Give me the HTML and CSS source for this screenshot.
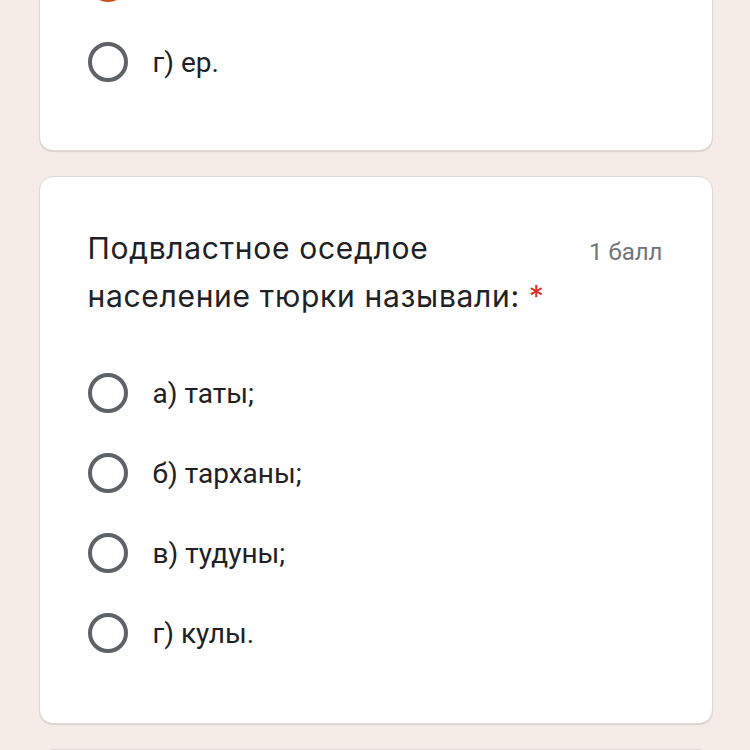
FILE: index.html
```html
<!DOCTYPE html>
<html lang="ru">
<head>
<meta charset="utf-8">
<link rel="stylesheet" href="styles.css">
</head>
<body>
<div class="page">
  <div class="card card-first">
    <div class="option"><span class="radio radio-on"><span class="dot"></span></span></div>
    <div class="option"><span class="radio"></span><span class="label">г) ер.</span></div>
  </div>
  <div class="card">
    <div class="head">
      <div class="title">Подвластное оседлое население тюрки называли:<span class="req">*</span></div>
      <div class="points">1 балл</div>
    </div>
    <div class="options">
      <div class="option"><span class="radio"></span><span class="label">а) таты;</span></div>
      <div class="option"><span class="radio"></span><span class="label">б) тарханы;</span></div>
      <div class="option"><span class="radio"></span><span class="label">в) тудуны;</span></div>
      <div class="option"><span class="radio"></span><span class="label">г) кулы.</span></div>
    </div>
  </div>
  <div class="card card-last"></div>
</div>
</body>
</html>
```
FILE: styles.css
```css
html, body {
  margin: 0;
  padding: 0;
  background: #f5ece7;
  overflow: hidden;
  height: 750px;
}
.page {
  width: 674px;
  margin: 0 auto;
  padding-left: 1px;
  display: flex;
  flex-direction: column;
  gap: 25px;
  font-family: Roboto, "Noto Sans", sans-serif;
  color: #202124;
}
.card {
  background: #fff;
  border: 1px solid #dddad9;
  border-radius: 14px;
  box-shadow: 0 1px 1px rgba(0, 0, 0, 0.12);
  padding: 47px 49px 50px 48px;
}
.card-first {
  margin-top: -80px;
  padding-top: 21px;
  padding-bottom: 48px;
}
.card-last {
  height: 200px;
}
.head {
  display: flex;
  justify-content: space-between;
  align-items: flex-start;
}
.title {
  width: 470px;
  font-family: Inter, "Open Sans", sans-serif;
  font-size: 30px;
  letter-spacing: 0.7px;
  line-height: 48px;
  color: #202124;
}
.req {
  color: #d93025;
  margin-left: 9px;
}
.points {
  font-size: 24px;
  color: #70757a;
  line-height: 56px;
}
.options {
  margin-top: 33px;
}
.option {
  height: 80px;
  display: flex;
  align-items: center;
}
.radio {
  box-sizing: border-box;
  width: 40px;
  height: 40px;
  border: 4px solid #5f6368;
  border-radius: 50%;
  flex: none;
  display: flex;
  align-items: center;
  justify-content: center;
}
.radio-on {
  border-color: #c5501e;
}
.dot {
  width: 20px;
  height: 20px;
  border-radius: 50%;
  background: #c5501e;
}
.label {
  margin-left: 25px;
  font-size: 28px;
  color: #202124;
}
```
